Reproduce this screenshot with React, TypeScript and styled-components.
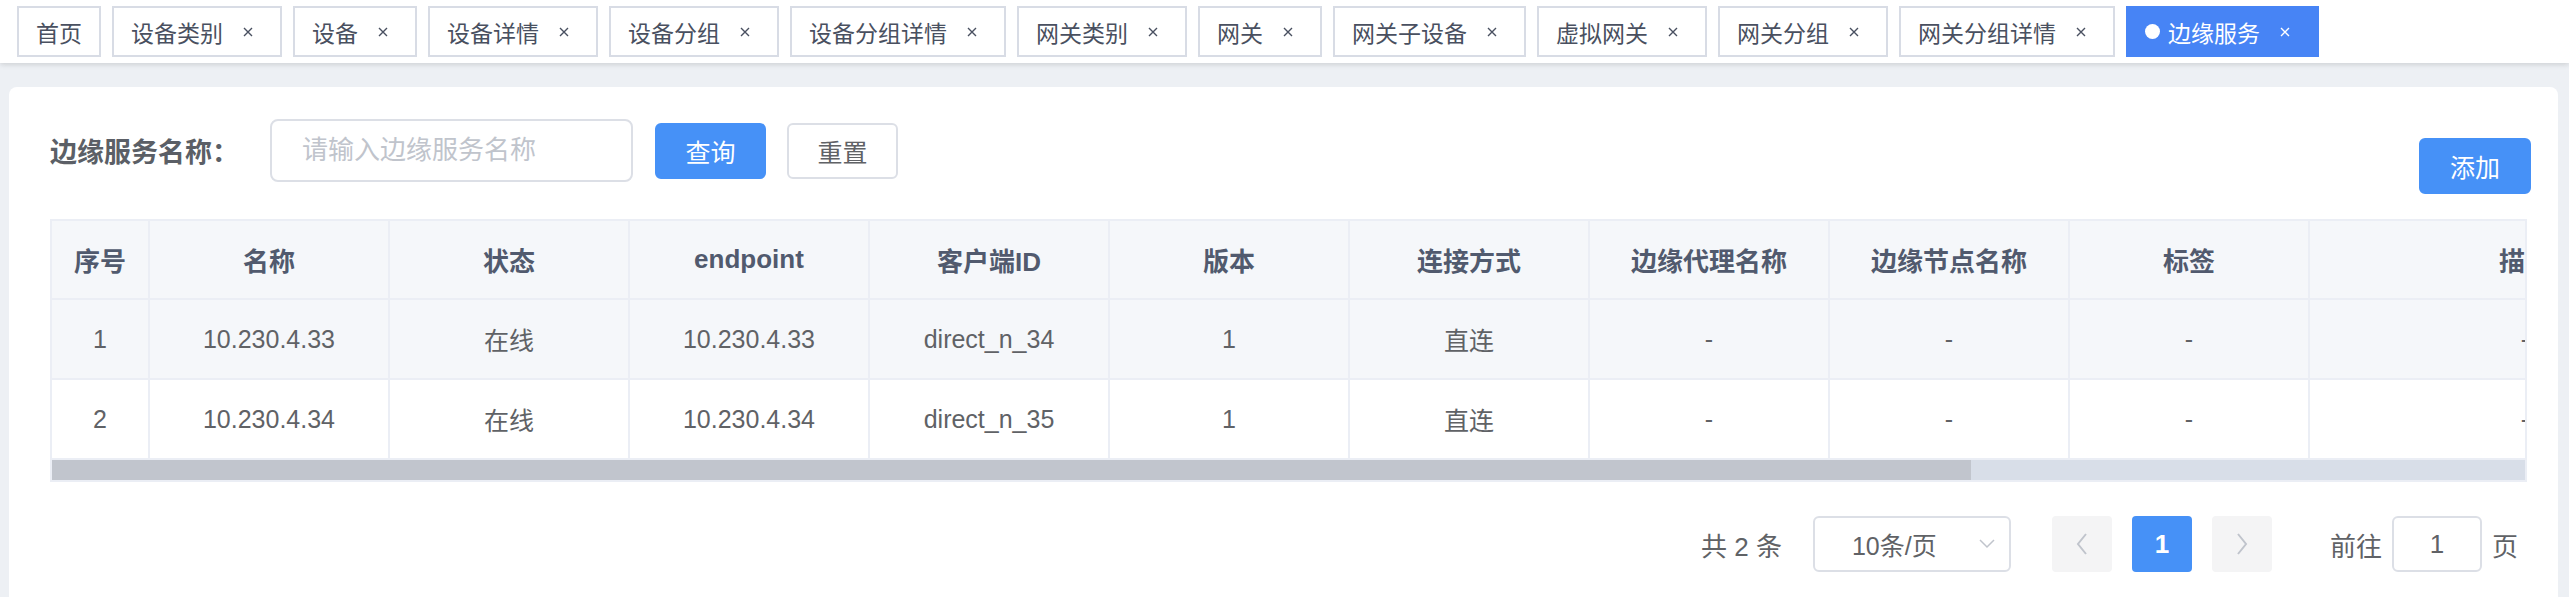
import React from "react";
import styled, { createGlobalStyle, css } from "styled-components";

const GlobalStyle = createGlobalStyle`
  html, body {
    margin: 0;
    padding: 0;
    background: #edf0f4;
    font-family: "Liberation Sans", "Noto Sans CJK SC", sans-serif;
    overflow: hidden;
  }
  * { box-sizing: border-box; }
`;

const PRIMARY = "#4691f7";
const ACTIVE_TAG = "#4784f5";

const Page = styled.div`
  height: 597px;
  overflow: hidden;
`;

const TagsBar = styled.div`
  position: relative;
  z-index: 1;
  height: 63px;
  background: #fff;
  display: flex;
  align-items: center;
  gap: 11px;
  padding-left: 17px;
  box-shadow: 0 2px 5px rgba(0, 0, 0, 0.1), 0 0 6px rgba(0, 0, 0, 0.04);
`;

const Tag = styled.div<{ $active?: boolean }>`
  height: 51px;
  display: inline-flex;
  align-items: center;
  padding: 0 17px;
  border: 2px solid #d8dce5;
  background: #fff;
  color: #495060;
  font-size: 23px;
  white-space: nowrap;
  ${(p) =>
    p.$active &&
    css`
      background: ${ACTIVE_TAG};
      border-color: ${ACTIVE_TAG};
      color: #fff;
    `}
`;

const Dot = styled.span`
  width: 15px;
  height: 15px;
  border-radius: 50%;
  background: #fff;
  margin-right: 8px;
`;

const CloseBox = styled.span`
  width: 30px;
  height: 30px;
  margin-left: 10px;
  display: inline-flex;
  align-items: center;
  justify-content: center;
`;

const Main = styled.div`
  padding: 24px 11px 0 9px;
`;

const Card = styled.div`
  background: #fff;
  border-radius: 8px 8px 0 0;
  padding: 32px 31px 30px 41px;
`;

const Toolbar = styled.div`
  display: flex;
  justify-content: space-between;
  align-items: flex-start;
  height: 63px;
`;

const SearchForm = styled.div`
  display: flex;
  align-items: center;
  height: 63px;
`;

const Label = styled.label`
  font-size: 27px;
  font-weight: 700;
  color: #5b5f66;
  margin-right: 31px;
  white-space: nowrap;
`;

const SearchInput = styled.input`
  width: 363px;
  height: 63px;
  border: 2px solid #dcdfe6;
  border-radius: 8px;
  padding: 0 30px;
  font-size: 26px;
  font-family: inherit;
  color: #606266;
  margin-right: 22px;
  outline: none;
  &::placeholder {
    color: #c0c4cc;
  }
`;

const Button = styled.button<{ $primary?: boolean }>`
  width: 111px;
  height: 56px;
  border-radius: 6px;
  font-size: 25px;
  font-family: inherit;
  cursor: pointer;
  border: 2px solid ${(p) => (p.$primary ? PRIMARY : "#dcdfe6")};
  background: ${(p) => (p.$primary ? PRIMARY : "#fff")};
  color: ${(p) => (p.$primary ? "#fff" : "#606266")};
  & + & {
    margin-left: 21px;
  }
`;

const AddButton = styled(Button)`
  width: 112px;
  margin-top: 19px;
  margin-right: -4px;
`;

const TableWrap = styled.div`
  margin-top: 37px;
  border: 2px solid #ebeef5;
  overflow: hidden;
`;

const TableInner = styled.div`
  width: 3196px;
`;

const COLS = "98px repeat(9, 240px) 432px 504px";

const Row = styled.div<{ $bg: string }>`
  display: grid;
  grid-template-columns: ${COLS};
  background: ${(p) => p.$bg};
`;

const Cell = styled.div<{ $head?: boolean }>`
  height: ${(p) => (p.$head ? 79 : 80)}px;
  display: flex;
  align-items: center;
  justify-content: center;
  border-right: 2px solid #ebeef5;
  border-bottom: 2px solid #ebeef5;
  white-space: nowrap;
  font-size: ${(p) => (p.$head ? 26 : 25)}px;
  font-weight: ${(p) => (p.$head ? 700 : 400)};
  color: ${(p) => (p.$head ? "#515a6e" : "#606266")};
`;

const ScrollTrack = styled.div`
  height: 20px;
  background: #d8dee8;
`;

const ScrollThumb = styled.div`
  height: 100%;
  background: #c1c5cd;
`;

const Pagination = styled.div`
  margin-top: 34px;
  display: flex;
  justify-content: flex-end;
  align-items: center;
  height: 56px;
  padding-right: 9px;
  font-size: 26px;
  color: #606266;
`;

const Total = styled.span`
  margin-right: 31px;
  white-space: nowrap;
`;

const SizeSelect = styled.div`
  width: 198px;
  height: 56px;
  border: 2px solid #dcdfe6;
  border-radius: 6px;
  display: flex;
  align-items: center;
  justify-content: space-between;
  padding: 0 14px 0 37px;
  margin-right: 41px;
  font-size: 25px;
  color: #606266;
`;

const PageBtn = styled.div<{ $active?: boolean }>`
  width: 60px;
  height: 56px;
  border-radius: 4px;
  display: flex;
  align-items: center;
  justify-content: center;
  background: ${(p) => (p.$active ? PRIMARY : "#f4f4f5")};
  color: ${(p) => (p.$active ? "#fff" : "#c0c4cc")};
  font-weight: 700;
  font-size: 26px;
  & + & {
    margin-left: 20px;
  }
`;

const JumpText = styled.span<{ $gap?: number }>`
  margin-left: ${(p) => p.$gap ?? 0}px;
  white-space: nowrap;
`;

const JumpInput = styled.div`
  width: 90px;
  height: 56px;
  border: 2px solid #dcdfe6;
  border-radius: 6px;
  margin: 0 10px;
  display: flex;
  align-items: center;
  justify-content: center;
  font-size: 26px;
  color: #606266;
`;

const CloseIcon = () => (
  <CloseBox>
    <svg width="10" height="10" viewBox="0 0 10 10">
      <path d="M1 1 L9 9 M9 1 L1 9" stroke="currentColor" strokeWidth="1.4" fill="none" />
    </svg>
  </CloseBox>
);

const Chevron = ({ dir }: { dir: "left" | "right" | "down" }) => {
  if (dir === "down")
    return (
      <svg width="16" height="10" viewBox="0 0 16 10">
        <polyline points="1,1 8,8 15,1" stroke="#c0c4cc" strokeWidth="1.5" fill="none" />
      </svg>
    );
  const pts = dir === "left" ? "10,1 2,11 10,21" : "2,1 10,11 2,21";
  return (
    <svg width="12" height="22" viewBox="0 0 12 22">
      <polyline points={pts} stroke="#c0c4cc" strokeWidth="2" fill="none" />
    </svg>
  );
};

const tabs = [
  { label: "首页", closable: false },
  { label: "设备类别", closable: true },
  { label: "设备", closable: true },
  { label: "设备详情", closable: true },
  { label: "设备分组", closable: true },
  { label: "设备分组详情", closable: true },
  { label: "网关类别", closable: true },
  { label: "网关", closable: true },
  { label: "网关子设备", closable: true },
  { label: "虚拟网关", closable: true },
  { label: "网关分组", closable: true },
  { label: "网关分组详情", closable: true },
  { label: "边缘服务", closable: true, active: true },
];

const headers = [
  "序号",
  "名称",
  "状态",
  "endpoint",
  "客户端ID",
  "版本",
  "连接方式",
  "边缘代理名称",
  "边缘节点名称",
  "标签",
  "描述",
  "操作",
];

const rows = [
  ["1", "10.230.4.33", "在线", "10.230.4.33", "direct_n_34", "1", "直连", "-", "-", "-", "-", ""],
  ["2", "10.230.4.34", "在线", "10.230.4.34", "direct_n_35", "1", "直连", "-", "-", "-", "-", ""],
];

export default function App() {
  const visibleRatio = 0.776;
  return (
    <Page>
      <GlobalStyle />
      <TagsBar>
        {tabs.map((t) => (
          <Tag key={t.label} $active={t.active}>
            {t.active && <Dot />}
            {t.label}
            {t.closable && <CloseIcon />}
          </Tag>
        ))}
      </TagsBar>
      <Main>
        <Card>
          <Toolbar>
            <SearchForm>
              <Label>边缘服务名称：</Label>
              <SearchInput placeholder="请输入边缘服务名称" />
              <Button $primary>查询</Button>
              <Button>重置</Button>
            </SearchForm>
            <AddButton $primary>添加</AddButton>
          </Toolbar>
          <TableWrap>
            <TableInner>
              <Row $bg="#f5f7fa">
                {headers.map((h) => (
                  <Cell key={h} $head>
                    {h}
                  </Cell>
                ))}
              </Row>
              {rows.map((r, i) => (
                <Row key={i} $bg={i === 0 ? "#f5f7fa" : "#fff"}>
                  {r.map((c, j) => (
                    <Cell key={j}>{c}</Cell>
                  ))}
                </Row>
              ))}
            </TableInner>
            <ScrollTrack>
              <ScrollThumb style={{ width: `${visibleRatio * 100}%` }} />
            </ScrollTrack>
          </TableWrap>
          <Pagination>
            <Total>共 2 条</Total>
            <SizeSelect>
              <span>10条/页</span>
              <Chevron dir="down" />
            </SizeSelect>
            <PageBtn>
              <Chevron dir="left" />
            </PageBtn>
            <PageBtn $active>1</PageBtn>
            <PageBtn>
              <Chevron dir="right" />
            </PageBtn>
            <JumpText $gap={58}>前往</JumpText>
            <JumpInput>1</JumpInput>
            <JumpText>页</JumpText>
          </Pagination>
        </Card>
      </Main>
    </Page>
  );
}
